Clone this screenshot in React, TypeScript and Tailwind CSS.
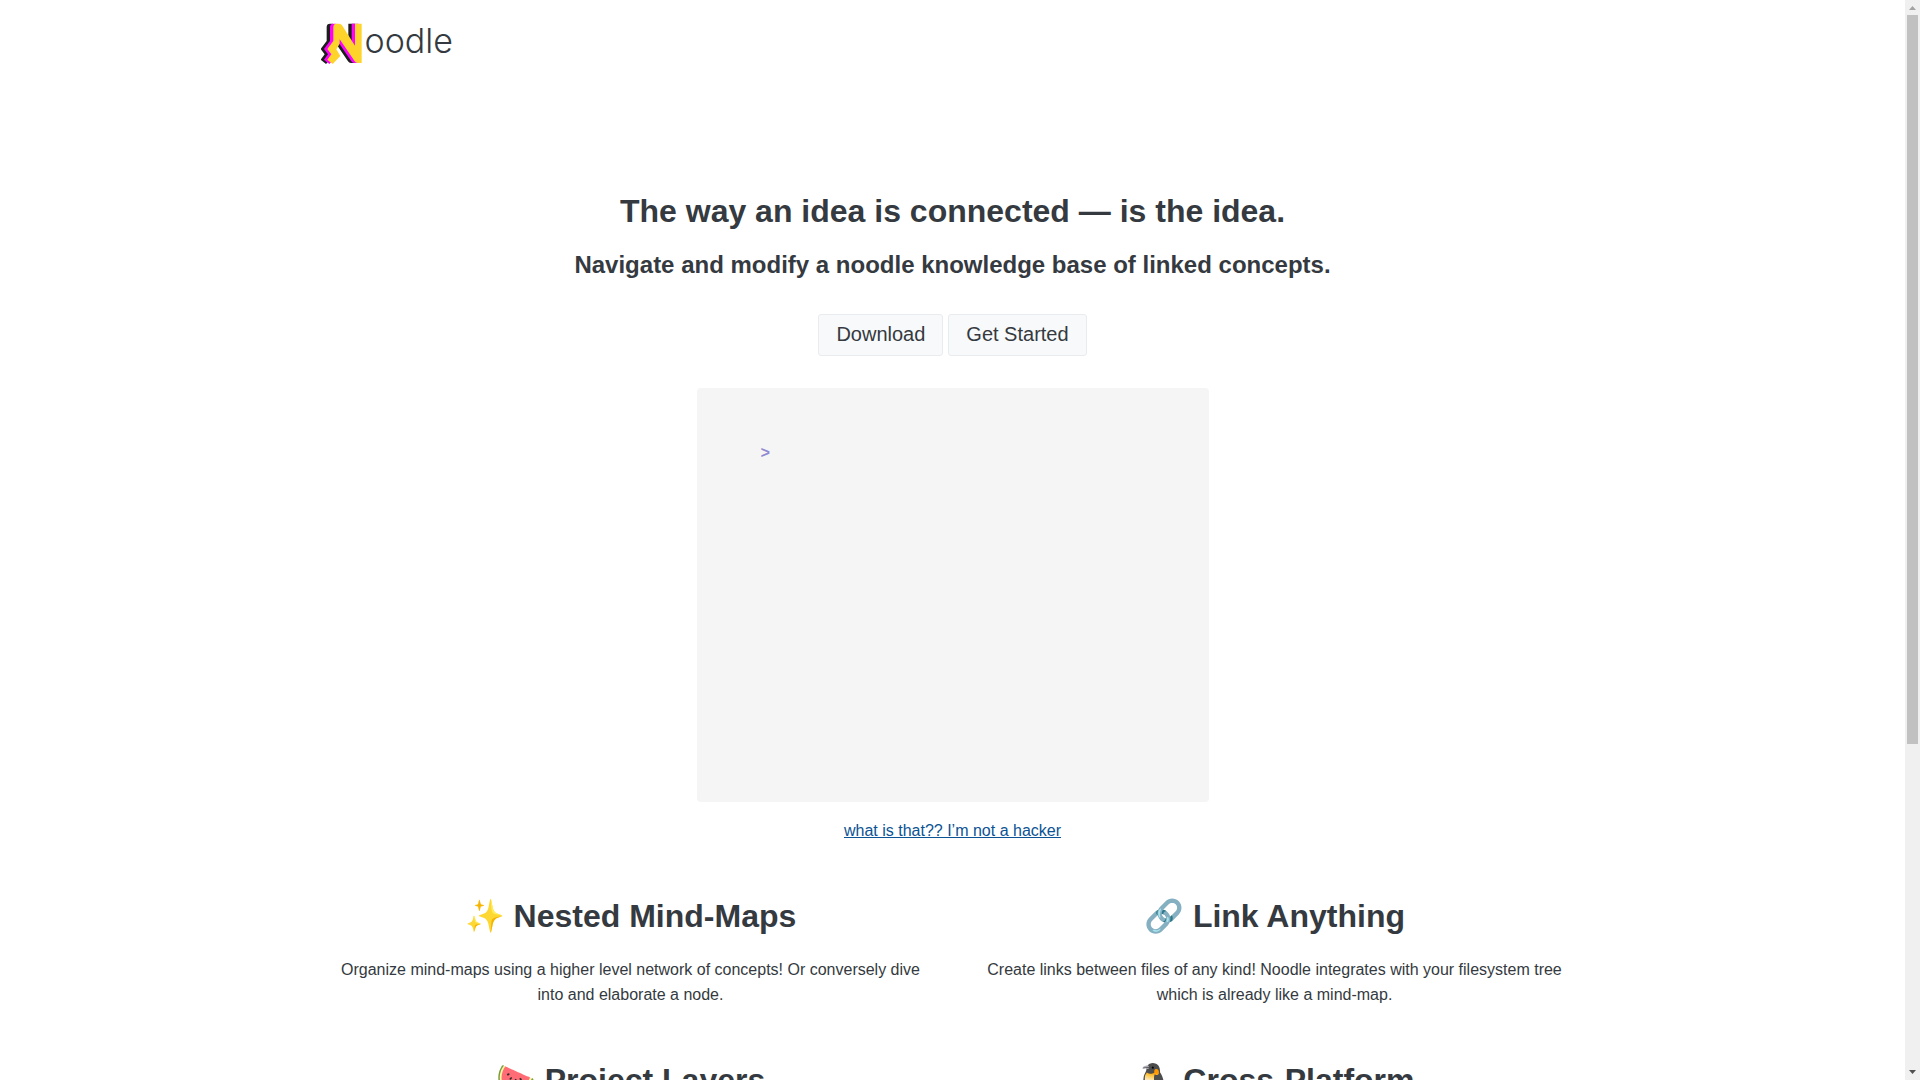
interface Feature {
  icon: string
  title: string
  text: string
}

const FEATURES: Feature[] = [
  {
    icon: '✨',
    title: 'Nested Mind-Maps',
    text: 'Organize mind-maps using a higher level network of concepts! Or conversely dive into and elaborate a node.'
  },
  {
    icon: '🔗',
    title: 'Link Anything',
    text: 'Create links between files of any kind! Noodle integrates with your filesystem tree which is already like a mind-map.'
  },
  { icon: '🍉', title: 'Project Layers', text: '' },
  { icon: '🐧', title: 'Cross-Platform', text: '' }
]

// Wavy-legged N, stacked three times to get the layered shadow
const MARK =
  'M98 50 Q98 40 108 40 H116 Q121 40 124 45 L163 106 V40 H183 V158 H171 Q165 158 162 153 L117 87 V100 L107 117 L119 137 L96 161 L80 148 L92 132 L80 116 L98 92 Z'

function Logo() {
  return (
    <a href="#" className="flex items-start text-[#343a40]">
      <svg viewBox="61 38 126 126" className="size-[42px]" aria-hidden="true">
        <path d={MARK} fill="#1d1d1b" transform="translate(-20 0)" />
        <path d={MARK} fill="#ff00ff" transform="translate(-10 0)" />
        <path d={MARK} fill="#ffd42a" />
      </svg>
      <span className="ml-[2px] font-[Inter,sans-serif] text-[34px] leading-[36px] font-light">oodle</span>
    </a>
  )
}

function LinkButton({ href, children }: { href: string; children: string }) {
  return (
    <a
      href={href}
      className="rounded-[3px] border border-[#e9ecef] bg-[#f8f9fa] px-[17px] pt-1 pb-1.5 text-[20px] leading-[30px]"
    >
      {children}
    </a>
  )
}

function FeatureCard({ feature }: { feature: Feature }) {
  return (
    <section>
      <h2 className="text-[32px] leading-[48px] font-bold">
        {feature.icon} {feature.title}
      </h2>
      <p className="mt-[17px] min-h-[50px] px-3 text-base leading-[25px]">{feature.text}</p>
    </section>
  )
}

function ScrollRail() {
  return (
    <div className="flex w-[15px] shrink-0 flex-col items-center bg-[#f0f0f0]" aria-hidden="true">
      <svg viewBox="0 0 15 15" className="size-[15px] shrink-0">
        <path d="M4 10 L7.5 6 L11 10 Z" fill="#a3a3a3" />
      </svg>
      <div className="flex w-[11px] grow flex-col">
        <div className="basis-[69.4%] bg-[#c1c1c1]" />
      </div>
      <svg viewBox="0 0 15 15" className="size-[15px] shrink-0">
        <path d="M4 5 L7.5 9 L11 5 Z" fill="#505050" />
      </svg>
    </div>
  )
}

export default function App() {
  return (
    <div className="flex h-screen overflow-hidden bg-white font-['Liberation_Sans',Arial,sans-serif] text-[#343a40]">
      <div className="grow overflow-hidden">
        <div className="mx-auto max-w-[1280px] px-2">
          <header className="flex pt-[23px]">
            <Logo />
          </header>

          <main className="text-center">
            <h1 className="mt-[122px] text-[32px] leading-[48px] font-bold">
              The way an idea is connected — is the idea.
            </h1>
            <h2 className="mt-3 text-[24px] leading-[36px] font-bold">
              Navigate and modify a noodle knowledge base of linked concepts.
            </h2>

            <div className="mt-[31px] flex justify-center gap-[5px]">
              <LinkButton href="#download">Download</LinkButton>
              <LinkButton href="#start">Get Started</LinkButton>
            </div>

            <div className="mx-auto mt-8 h-[414px] max-w-[512px] rounded-[4px] bg-[#f5f5f5] px-16 py-[54px] text-left font-['Liberation_Mono',monospace] text-base font-bold text-[#9089d1]">
              &gt;
            </div>

            <p className="mt-4 text-base leading-[25px]">
              <a href="#help" className="text-[#0b5394] underline">what is that?? I’m not a hacker</a>
            </p>

            <div className="mt-[49px] grid grid-cols-2 gap-x-6 gap-y-[49px]">
              {FEATURES.map((feature) => (
                <FeatureCard key={feature.title} feature={feature} />
              ))}
            </div>
          </main>
        </div>
      </div>
      <ScrollRail />
    </div>
  )
}
